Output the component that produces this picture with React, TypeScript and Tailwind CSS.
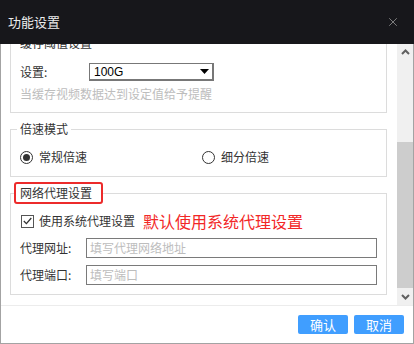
import { X } from 'lucide-react'

const Radio = ({ checked, label }: { checked?: boolean; label: string }) => (
  <label className="flex items-center gap-[6px]">
    <span className="w-[13px] h-[13px] rounded-full border border-[#333] flex items-center justify-center bg-white">
      {checked && <span className="w-[7px] h-[7px] rounded-full bg-[#333]" />}
    </span>
    <span>{label}</span>
  </label>
)

const Field = ({ label, placeholder }: { label: string; placeholder: string }) => (
  <div className="flex items-center h-[20px]">
    <span className="w-[66px] shrink-0">{label}</span>
    <div className="flex-1 h-[20px] border border-[#7a7a7a] bg-white flex items-center pl-[3px] text-[#bdbdbd]">
      {placeholder}
    </div>
  </div>
)

const Chevron = ({ down }: { down?: boolean }) => (
  <svg width="9" height="6" viewBox="0 0 9 6" className={down ? 'rotate-180' : ''}>
    <polyline points="1,5 4.5,1.5 8,5" fill="none" stroke="#606060" strokeWidth="2" />
  </svg>
)

export default function App() {
  return (
    <div className="w-[414px] h-[344px] flex flex-col bg-white text-[12px] leading-[16px] text-[#333] font-['Noto_Sans_CJK_SC',sans-serif]">
      <div className="h-[44px] shrink-0 bg-[#17171b] flex items-center justify-between pl-[8px] pr-[14px]">
        <span className="text-[13px] text-[#ececec]">功能设置</span>
        <X size={14} strokeWidth={1.5} color="#8c8c8c" />
      </div>

      <div className="flex-1 flex flex-col border-l border-r border-b border-[#a3a3a3]">
        <div className="h-[261px] flex">
          <div className="flex-1 overflow-hidden">
            <div className="mt-[-9px]">
              <fieldset className="ml-[9px] mr-[10px] border border-[#dcdcdc] pl-[9px] pr-[9px] pb-[10px]">
                <legend className="ml-[-3px] px-[3px]">缓存阈值设置</legend>
                <div className="flex items-center mt-[12px] h-[18px]">
                  <span className="w-[69px]">设置:</span>
                  <div className="w-[125px] h-[18px] border border-[#777] border-r-2 border-b-2 flex items-center justify-between pl-[4px] pr-[3px] font-['Liberation_Sans',sans-serif] text-[12px] text-black">
                    <span>100G</span>
                    <svg width="9" height="5" viewBox="0 0 9 5">
                      <polygon points="0,0 9,0 4.5,5" fill="#000" />
                    </svg>
                  </div>
                </div>
                <div className="mt-[5px] text-[#bdbdbd]">当缓存视频数据达到设定值给予提醒</div>
              </fieldset>

              <fieldset className="mt-[8px] ml-[9px] mr-[10px] border border-[#dcdcdc] pl-[9px] pr-[9px] pb-[11px]">
                <legend className="ml-[-3px] px-[3px]">倍速模式</legend>
                <div className="flex mt-[12px] h-[16px] items-center">
                  <div className="w-[182px]">
                    <Radio checked label="常规倍速" />
                  </div>
                  <Radio label="细分倍速" />
                </div>
              </fieldset>

              <fieldset className="mt-[5px] ml-[9px] mr-[10px] border border-[#dcdcdc] pl-[9px] pr-[9px] pb-[9px]">
                <legend className="ml-[-6px] border-2 border-[#ec2b2b] rounded-[3px] pl-[4px] pr-[9px] leading-[18px]">
                  网络代理设置
                </legend>
                <div className="flex items-center mt-[7px] h-[20px]">
                  <span className="w-[13px] h-[13px] ml-[1px] border border-[#555] flex items-center justify-center">
                    <svg width="9" height="8" viewBox="0 0 9 8">
                      <polyline points="0.8,4 3.4,6.6 8.3,1" fill="none" stroke="#333" strokeWidth="1.3" />
                    </svg>
                  </span>
                  <span className="ml-[5px]">使用系统代理设置</span>
                  <span className="ml-[8px] text-[16px] leading-[20px] text-[#f22727]">默认使用系统代理设置</span>
                </div>
                <div className="mt-[7px] flex flex-col gap-[7px]">
                  <Field label="代理网址:" placeholder="填写代理网络地址" />
                  <Field label="代理端口:" placeholder="填写端口" />
                </div>
              </fieldset>
            </div>
          </div>

          <div className="w-[16px] shrink-0 bg-[#f0f0f0] flex flex-col">
            <div className="h-[16px] flex items-center justify-center">
              <Chevron />
            </div>
            <div className="flex-1">
              <div className="mt-[82px] h-[146px] bg-[#cdcdcd]" />
            </div>
            <div className="h-[16px] flex items-center justify-center">
              <Chevron down />
            </div>
          </div>
        </div>

        <div className="flex-1 border-t border-[#ececec] flex justify-end items-start gap-[6px] pt-[9px] pr-[9px]">
          <button className="w-[50px] h-[19px] rounded-[2px] bg-[#409eff] text-white text-[13px] leading-[19px]">确认</button>
          <button className="w-[50px] h-[19px] rounded-[2px] bg-[#409eff] text-white text-[13px] leading-[19px]">取消</button>
        </div>
      </div>
    </div>
  )
}
